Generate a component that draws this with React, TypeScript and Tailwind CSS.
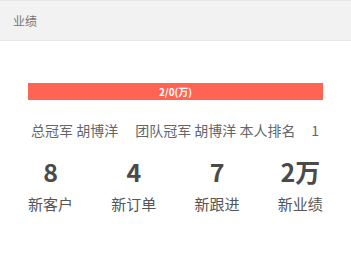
import React from "react";

const stats = [
  { value: "8", label: "新客户" },
  { value: "4", label: "新订单" },
  { value: "7", label: "新跟进" },
  { value: "2万", label: "新业绩" },
];

export default function App() {
  return (
    <div
      className="w-[351px] h-[255px] bg-white overflow-hidden"
      style={{ fontFamily: '"Noto Sans CJK SC", "Noto Sans", sans-serif' }}
    >
      <div className="h-[41px] bg-[#f2f2f2] border-t border-b border-[#e6e6e6] flex items-center pl-[13px] text-[12px] text-[#777]">
        业绩
      </div>
      <div className="mx-[28px] mt-[42px] h-[17px] bg-[#ff6452] flex items-center justify-center text-white text-[10px] font-bold">
        2/0(万)
      </div>
      <div className="flex items-center mt-[20px] pl-[31px] pr-[32px] text-[14px] text-[#666] leading-[20px]">
        <span>总冠军 胡博洋</span>
        <span className="ml-[17px]">团队冠军 胡博洋 本人排名</span>
        <span className="ml-auto">1</span>
      </div>
      <div className="grid grid-cols-4 px-[9px] mt-[16px]">
        {stats.map((s) => (
          <div key={s.label} className="flex flex-col items-center">
            <div className="text-[25px] font-bold text-[#4a4a4a] leading-[30px]">{s.value}</div>
            <div className="text-[15px] text-[#555] leading-[20px] mt-[8px]">{s.label}</div>
          </div>
        ))}
      </div>
    </div>
  );
}
